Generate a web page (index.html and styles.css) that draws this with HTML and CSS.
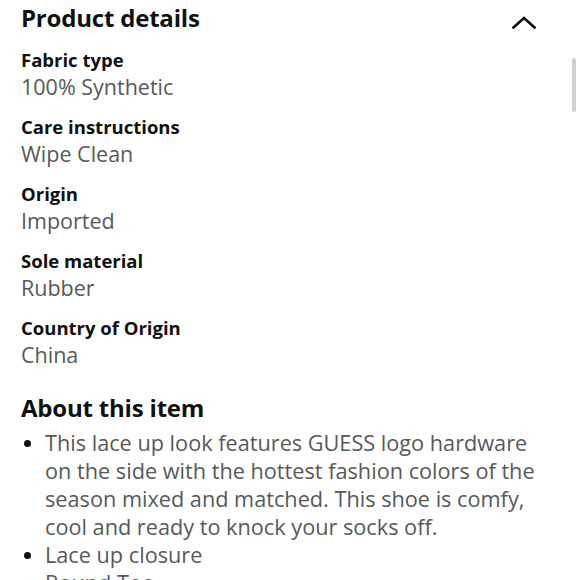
FILE: index.html
```html
<!DOCTYPE html>
<html>
<head>
<meta charset="utf-8">
<link rel="stylesheet" href="styles.css">
</head>
<body>
<div class="page">
  <div class="header">
    <h1 class="title">Product details</h1>
    <svg class="chevron" width="24" height="13" viewBox="0 0 24 13"><path d="M1.5 11.5 L12 2 L22.5 11.5" fill="none" stroke="#0f1111" stroke-width="2.6" stroke-linecap="square"/></svg>
  </div>
  <div class="details">
    <div class="item"><div class="label">Fabric type</div><div class="value">100% Synthetic</div></div>
    <div class="item"><div class="label">Care instructions</div><div class="value">Wipe Clean</div></div>
    <div class="item"><div class="label">Origin</div><div class="value">Imported</div></div>
    <div class="item"><div class="label">Sole material</div><div class="value">Rubber</div></div>
    <div class="item"><div class="label">Country of Origin</div><div class="value">China</div></div>
  </div>
  <h2 class="title about">About this item</h2>
  <ul class="bullets">
    <li>This lace up look features GUESS logo hardware on the side with the hottest fashion colors of the season mixed and matched. This shoe is comfy, cool and ready to knock your socks off.</li>
    <li>Lace up closure</li>
    <li>Round Toe</li>
  </ul>
</div>
<div class="scrollbar"></div>
</body>
</html>
```
FILE: styles.css
```css
html, body { margin: 0; padding: 0; background: #fff; overflow: hidden; height: 580px; }
body { font-family: "Open Sans", "Noto Sans", sans-serif; color: #0f1111; }
.page { padding: 0 21px; }
.header { display: flex; justify-content: space-between; align-items: center; height: 36px; }
.title { font-size: 24px; font-weight: 700; margin: 0; line-height: 36px; letter-spacing: -0.2px; }
.chevron { margin-right: 23px; margin-top: 8px; }
.details { margin-top: 11px; }
.item { margin-bottom: 13px; }
.label { font-size: 18.5px; font-weight: 700; line-height: 26px; }
.value { font-size: 21.5px; color: #565959; line-height: 28px; }
.about { margin-top: 22px; line-height: 34px; }
.bullets { margin: 4px 0 0 0; padding: 0 14px 0 24px; font-size: 21.7px; line-height: 28px; color: #565959; }
.bullets li { margin: 0; }
.bullets li::marker { color: #0f1111; font-size: 20px; }
.scrollbar { position: absolute; left: 572px; top: 58px; width: 4px; height: 54px; border-radius: 2px; background: #d0d0d0; }
```
